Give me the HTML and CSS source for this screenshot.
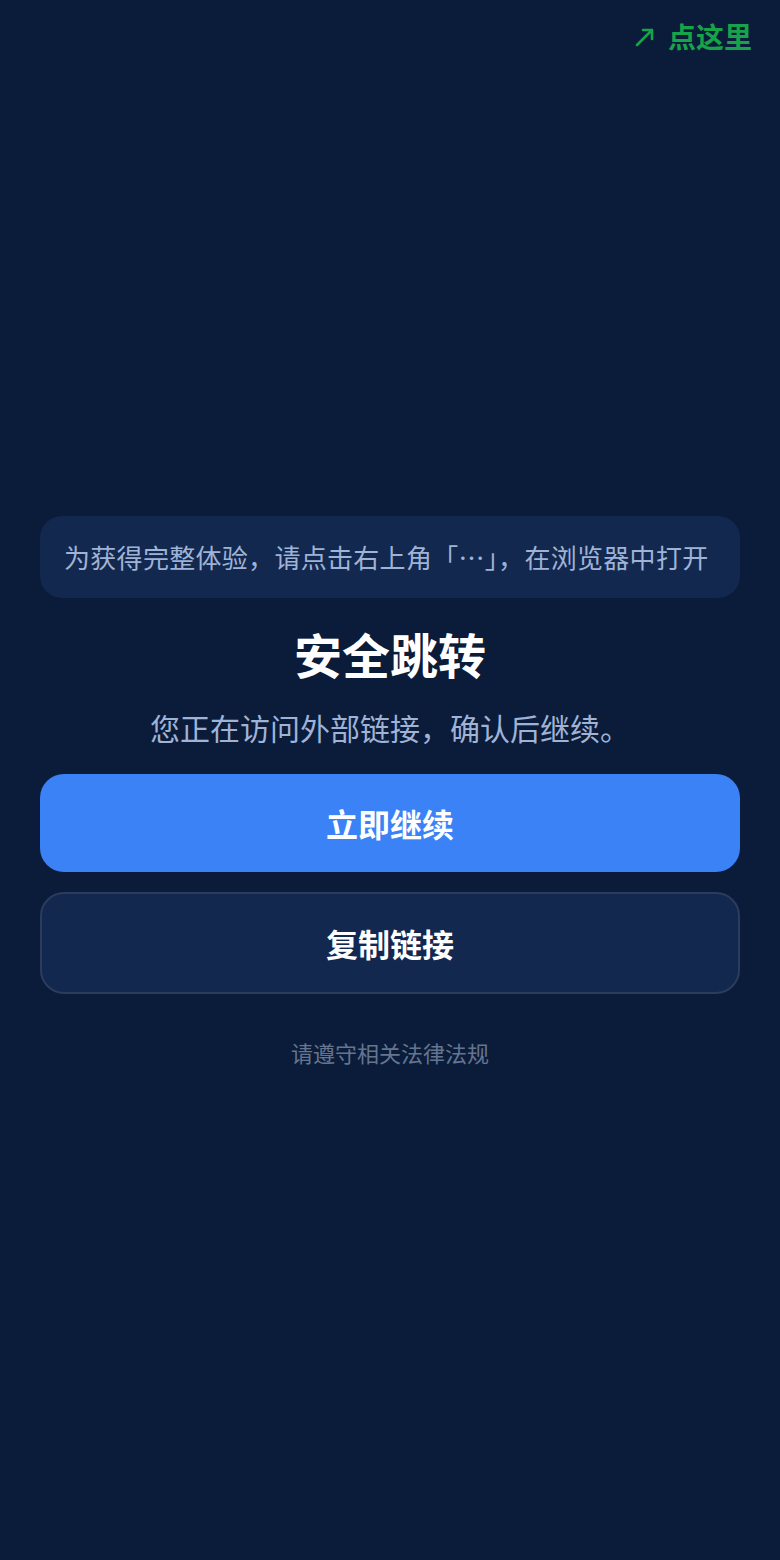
FILE: index.html
```html
<!DOCTYPE html>
<html lang="zh-CN">
<head>
<meta charset="utf-8">
<meta name="viewport" content="width=device-width, initial-scale=1">
<title>安全跳转</title>
<link rel="stylesheet" href="styles.css">
</head>
<body>
  <header class="topbar">
    <a class="hint-link" href="#">
      <svg class="hint-arrow" width="22" height="22" viewBox="0 0 22 22" aria-hidden="true">
        <path d="M3 19 L18 4 M9 4 H18 V13" fill="none" stroke="currentColor" stroke-width="2.6" stroke-linecap="round" stroke-linejoin="round"/>
      </svg>
      <span>点这里</span>
    </a>
  </header>

  <main class="page">
    <div class="notice">为获得完整体验，请点击右上角「…」，在浏览器中打开</div>
    <h1 class="title">安全跳转</h1>
    <p class="subtitle">您正在访问外部链接，确认后继续。</p>
    <div class="actions">
      <button class="btn btn-primary" type="button">立即继续</button>
      <button class="btn btn-secondary" type="button">复制链接</button>
    </div>
    <p class="footnote">请遵守相关法律法规</p>
  </main>
</body>
</html>
```

FILE: styles.css
```css
* {
  box-sizing: border-box;
}

html,
body {
  margin: 0;
  padding: 0;
}

body {
  min-height: 1560px;
  background: #0b1c3a;
  color: #ffffff;
  font-family: "Noto Sans CJK SC", "Noto Sans", sans-serif;
}

.topbar {
  display: flex;
  justify-content: flex-end;
  padding: 15px 28px 0 0;
}

.hint-link {
  display: flex;
  align-items: center;
  gap: 12px;
  color: #16a34a;
  font-size: 28px;
  font-weight: 700;
  line-height: 42px;
  text-decoration: none;
}

.hint-arrow {
  display: block;
  margin-top: 2px;
}

.page {
  display: flex;
  flex-direction: column;
  align-items: center;
  padding: 459px 40px 0;
}

.notice {
  width: 100%;
  background: #13284f;
  border-radius: 22px;
  padding: 20px 24px;
  color: #9fb3d6;
  font-size: 26px;
  line-height: 42px;
  letter-spacing: 0.3px;
  white-space: nowrap;
}

.title {
  margin: 26px 0 0;
  font-size: 48px;
  font-weight: 700;
  line-height: 58px;
  color: #ffffff;
}

.subtitle {
  margin: 23px 0 0;
  font-size: 30px;
  line-height: 45px;
  color: #9fb3d6;
}

.actions {
  width: 100%;
  display: flex;
  flex-direction: column;
  gap: 20px;
  margin-top: 24px;
}

.btn {
  width: 100%;
  border: 0;
  border-radius: 24px;
  padding: 25px 0;
  font-family: inherit;
  font-size: 32px;
  font-weight: 700;
  line-height: 48px;
  color: #ffffff;
  cursor: pointer;
}

.btn-primary {
  background: #3b82f6;
}

.btn-secondary {
  background: #13284f;
  border: 2px solid #2b3c5e;
}

.footnote {
  margin: 42px 0 0;
  font-size: 22px;
  line-height: 33px;
  color: #65758f;
}
```
